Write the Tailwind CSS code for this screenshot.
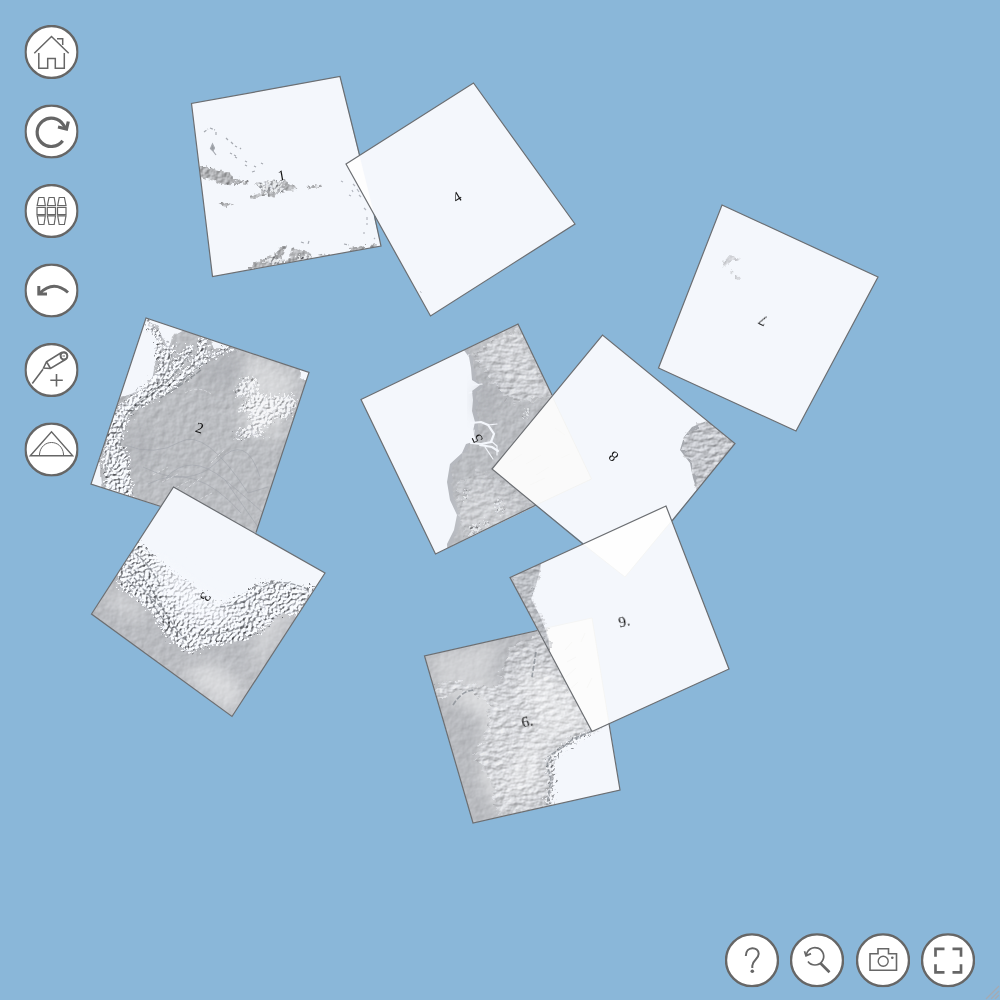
<!DOCTYPE html>
<html lang="en">
<head>
<meta charset="utf-8">
<title>Map puzzle</title>
<script src="https://cdn.jsdelivr.net/npm/@tailwindcss/browser@4"></script>
</head>
<body class="relative h-screen w-screen overflow-hidden bg-[#8ab7d9]">
<svg class="absolute inset-0" width="1000" height="1000" viewBox="0 0 1000 1000">
<defs>
  <filter id="plain" color-interpolation-filters="sRGB">
    <feTurbulence type="fractalNoise" baseFrequency="0.14" numOctaves="4" seed="4" result="n"/>
    <feDiffuseLighting in="n" surfaceScale="0.35" diffuseConstant="1.07" lighting-color="#f8faff" result="l"><feDistantLight azimuth="225" elevation="45"/></feDiffuseLighting>
    <feDisplacementMap in="SourceGraphic" in2="n" scale="8" xChannelSelector="R" yChannelSelector="G" result="d"/>
    <feComposite in="l" in2="d" operator="in"/>
  </filter>
  <filter id="hills" color-interpolation-filters="sRGB">
    <feTurbulence type="fractalNoise" baseFrequency="0.12 0.22" numOctaves="5" seed="9" result="n"/>
    <feDiffuseLighting in="n" surfaceScale="1.1" diffuseConstant="1.2" lighting-color="#f8faff" result="l"><feDistantLight azimuth="225" elevation="45"/></feDiffuseLighting>
    <feDisplacementMap in="SourceGraphic" in2="n" scale="14" xChannelSelector="R" yChannelSelector="G" result="d"/>
    <feComposite in="l" in2="d" operator="in"/>
  </filter>
  <filter id="peaks" color-interpolation-filters="sRGB">
    <feTurbulence type="fractalNoise" baseFrequency="0.36" numOctaves="3" seed="7" result="n"/>
    <feDiffuseLighting in="n" surfaceScale="2.3" diffuseConstant="1.32" lighting-color="#f8faff" result="l"><feDistantLight azimuth="225" elevation="48"/></feDiffuseLighting>
    <feComponentTransfer in="l" result="m"><feFuncR type="linear" slope=".8" intercept=".18"/><feFuncG type="linear" slope=".8" intercept=".185"/><feFuncB type="linear" slope=".8" intercept=".195"/></feComponentTransfer>
    <feDisplacementMap in="SourceGraphic" in2="n" scale="16" xChannelSelector="R" yChannelSelector="G" result="d"/>
    <feComposite in="m" in2="d" operator="in"/>
  </filter>
  <filter id="isle" color-interpolation-filters="sRGB" x="-20%" y="-40%" width="140%" height="180%">
    <feTurbulence type="fractalNoise" baseFrequency="0.25" numOctaves="3" seed="3" result="n"/>
    <feDiffuseLighting in="n" surfaceScale="0.7" diffuseConstant="1.03" lighting-color="#f4f6fa" result="l"><feDistantLight azimuth="225" elevation="45"/></feDiffuseLighting>
    <feDisplacementMap in="SourceGraphic" in2="n" scale="6" xChannelSelector="R" yChannelSelector="G" result="d"/>
    <feComposite in="l" in2="d" operator="in"/>
  </filter>
  <filter id="soft" x="-40%" y="-40%" width="180%" height="180%"><feGaussianBlur stdDeviation="8"/></filter>
  <path id="t1" d="M191.5 103.500L340 76.500L381 246L212.500 276.500Z"/>
  <path id="t2" d="M146 318L309 372.500L254 537L91 484Z"/>
  <path id="t3" d="M173.500 487L325 573L232 716.500L91.500 614Z"/>
  <path id="t4" d="M346 164L473.500 83L575 224L430.500 316Z"/>
  <path id="t5" d="M361 399.500L518 324L592 479L435.500 554Z"/>
  <path id="t6" d="M424.500 656L592 618L620 790L473 823Z"/>
  <path id="t7" d="M722 205L878 277L796 431L658.500 368Z"/>
  <path id="t8" d="M602.500 335L735 443.500L625 577L492 469Z"/>
  <path id="t9" d="M510 577.500L666 506L729 669L592 731.500Z"/>
  <clipPath id="c1"><use href="#t1"/></clipPath><clipPath id="c2"><use href="#t2"/></clipPath><clipPath id="c3"><use href="#t3"/></clipPath>
  <clipPath id="c5"><use href="#t5"/></clipPath><clipPath id="c6"><use href="#t6"/></clipPath><clipPath id="c7"><use href="#t7"/></clipPath><clipPath id="c8"><use href="#t8"/></clipPath><clipPath id="c9"><use href="#t9"/></clipPath>
</defs>

<!-- piece 1: Caribbean -->
<use href="#t1" fill="#f4f7fc"/>
<g clip-path="url(#c1)">
  <path filter="url(#isle)" d="M196 166L205 166L215 169L226 172L237 179L249 181L247 184L232 184L222 185L212 180L196 176ZM217 204L226 202L235 205L227 207ZM254 183L264 184L268 180L278 181L288 183L298 187L296 190L286 191L277 193L273 198L268 195L252 199L249 196L262 193L261 188ZM307 187L313 185L321 186L316 189L308 189ZM248 270L254 262L264 259L275 254L281 246L286 246L282 255L284 262L281 270ZM284 264L290 257L293 247L297 250L303 249L311 255L313 262L300 267L285 266ZM318 256L331 253L331 259L318 260ZM350 248L365 245L365 251L350 252ZM370 245L377 244L377 249L370 249Z"/>
  <path filter="url(#peaks)" opacity=".75" d="M258 184L266 182L278 182L284 187L282 192L262 192ZM231 180L247 182L240 184ZM264 260L276 256L282 262L276 268ZM296 256L310 256L312 264L298 264Z"/>
  <g fill="none" stroke="#a6aab1" stroke-width="1.200">
    <path d="M204 132L208 129M210 128L215 130M216 132L216 136M226 138l2 2M231 142l2 2M235 146l2 1M240 148l1 1M230 153l2 1M234 155l2 1M235 157l2 1M245 161l2 1M254 166l2 1M261 163l2 1M245 165l2 1M252 172l3-1M301 242l3 1M309 241l-1 3M344 244l5 1" stroke-dasharray="3 1.500"/>
    <path d="M210.500 148.500L212.500 144L214.500 148L213 151ZM213 151L216 155" fill="#989ca2"/>
    <path d="M341 181l2 1M353 184l2 2M357 189l2 3M359 195l2 2M364 208l2 2M367 217v3M367 223v2M364 232v2M352 190l1 2M349 195l2 1M374 238l1 1" stroke="#b4b8c0"/>
  </g>
</g>

<!-- piece 2: northern Andes -->
<use href="#t2" fill="#f4f7fc"/>
<g clip-path="url(#c2)">
  <path fill="#b9bcc2" d="M146 320L158 327L162 337L168 348L174 336L184 330L209 338L214 349L222 349L236 344L290 362L300 370L300 378L312 384L254 542L103 494L99 455L104 425L120 398L142 390L152 380L158 350L156 334Z"/>
  <path filter="url(#plain)" opacity=".8" d="M146 320L158 327L162 337L168 348L174 336L184 330L209 338L214 349L222 349L236 344L290 362L300 370L300 378L312 384L254 542L103 494L99 455L104 425L120 398L142 390L152 380L158 350L156 334Z"/>
  <path filter="url(#soft)" opacity=".35" fill="#a0a3a9" d="M205 362L240 350L250 365L235 385L200 385ZM130 430L150 430L150 465L135 465Z"/>
  <g fill="none" stroke="#fff" stroke-linecap="round" filter="url(#peaks)">
    <path stroke-width="6" d="M148 326Q164 333 158 358"/>
    <path stroke-width="10" d="M169 348Q166 375 144 392T122 416"/>
    <path stroke-width="8" d="M189 349Q168 378 152 388T124 412"/>
    <path stroke-width="8" d="M203 340Q203 363 175 382T128 408"/>
    <path stroke-width="5" d="M232 347L207 358L190 370"/>
    <path stroke-width="15" d="M124 410L113 438L110 460"/>
    <path stroke-width="25" d="M116 458L119 492"/>
  </g>
  <g fill="none" stroke="#74797f" stroke-width="1.300" opacity=".6" stroke-dasharray="6 1.500"><path d="M172 354Q166 382 146 396T124 420L114 440M192 350Q174 378 156 391T128 416M201 370Q182 385 160 398M206 347L202 364Q190 372 176 388M111 445L107 470M121 440L117 462"/></g>
  <path filter="url(#peaks)" opacity=".85" d="M235 392L243 378L256 378L257 390L270 397L292 395L297 405L289 418L276 416L268 426L258 429L266 438L252 436L238 439L236 432L252 425L248 412L238 410L246 402L254 394L240 398Z"/>
  <path filter="url(#soft)" opacity=".4" fill="#fff" d="M245 350L298 376L278 440L240 430Z"/>
  <g fill="none" stroke="#9fa4aa" stroke-width=".8" opacity=".7"><path d="M125 445Q155 457 180 442T248 493L268 487M166 478Q190 451 225 480T270 520M143 467Q190 490 218 461T260 477M225 480L258 527M148 484Q195 460 241 513"/></g>
  <g fill="none" stroke="#eef1f5" stroke-width=".8" opacity=".7"><path d="M153 475l15-8m-6 15 18-9m-8 17 18-10M185 490l17-13M196 501l16-8M211 463l13-13M185 393q14-8 26 1" stroke-dasharray="3 2"/></g>
</g>

<!-- piece 3: central Andes -->
<use href="#t3" fill="#f4f7fc"/>
<g clip-path="url(#c3)">
  <path fill="#b7babf" d="M118 568L154 610L190 650L240 638L300 602L322 590L232 723L88 616Z"/>
  <path filter="url(#plain)" opacity=".65" d="M118 568L154 610L190 650L240 638L300 602L322 590L232 723L82 616Z"/>
  <path filter="url(#soft)" opacity=".45" fill="#fff" d="M180 670L215 662L245 688L232 715L205 695Z"/>
  <path filter="url(#soft)" opacity=".4" fill="#fff" d="M113 588L150 615L135 620L105 600ZM260 620L300 600L250 680Z"/>
  <path filter="url(#peaks)" d="M136 540L151 552L170 570L190 583L206 595L220 603L240 597L256 584L275 580L296 586L320 586L299 614L280 614L262 630L240 641L212 644L190 653L168 638L154 615L138 599L121 588L116 572Z"/>
  <path fill="#f8faff" opacity=".7" filter="url(#soft)" d="M150 552L205 595L240 606L225 622L190 620L165 590Z"/>
  <g fill="none" stroke="#6a6f76" stroke-width="1.400" opacity=".65" stroke-dasharray="5 2"><path d="M122 562Q145 575 158 600T188 642M130 572Q144 592 162 608M127 580L138 590M150 598Q160 620 178 634M135 553Q150 565 160 585M220 607Q245 605 260 590T310 590M200 635Q235 635 255 618"/></g>
</g>

<use href="#t4" fill="#f4f7fc"/>
<path d="M346 164L359.500 155.500L374.500 216Z" fill="#fefefe"/>
<path d="M420 291.500l1.500 1" stroke="#b7bbc2"/>

<!-- piece 5: Amazon mouth -->
<use href="#t5" fill="#f4f7fc"/>
<g clip-path="url(#c5)">
  <path fill="#b6b9bf" d="M463 349L469 357L471 368L472 380L480 385L472 391L473 400L472 411L475 422L473 431L476 441L466 444L462 453L450 464L447 482L450 500L457 515L454 530L447 544L448 560L600 500L592 470L520 315Z"/>
  <path filter="url(#plain)" opacity=".85" d="M467 349L473 357L475 368L476 380L484 385L476 391L477 400L476 411L479 422L477 431L480 441L470 444L466 453L454 464L451 482L454 500L461 515L458 530L451 544L452 560L600 500L592 470L520 315Z"/>
  <path filter="url(#soft)" opacity=".35" fill="#fff" d="M480 345L518 328L550 400L520 395L500 370Z"/>
  <path filter="url(#soft)" opacity=".25" fill="#fff" d="M460 500L480 480L510 505L520 520L460 535Z"/>
  <path filter="url(#soft)" opacity=".4" fill="#a0a3a9" d="M476 388L498 382L490 420L477 415Z"/>
  <path filter="url(#hills)" opacity=".55" d="M472 355L517 327L552 396L515 403L494 385Z"/>
  <path filter="url(#hills)" opacity=".35" d="M455 485L480 470L515 490L535 505L465 540L460 515Z"/>
  <g filter="url(#peaks)"><path opacity=".6" d="M496 499l6 3l1 11l-7-2ZM470 527l9-3l2 10l-12 2ZM484 520l6 2l-2 6ZM464 490l4 3l-4 6ZM524 408l5 4l-3 9Z"/></g>
  <g fill="none" stroke="#f4f7fc" stroke-linecap="round"><path stroke-width="2.200" d="M471 423L481 422L488 425L494 434L491 442L481 444L471 443M480 445L492 447L498 451"/><path stroke-width="1.200" d="M488 425L497 424M473 385L482 384M491 441L497 446L497 455M485 447L493 459M472 392L469 393M474 430L473 440"/></g>
</g>

<use href="#t7" fill="#f4f7fc"/>
<g clip-path="url(#c7)"><path filter="url(#isle)" opacity=".5" d="M725 259L730 255L736 257L741 258L738 261L730 261L725 266L722 268ZM735 275L739 276L740 280L735 279ZM731 270l3 2l-2 1Z"/></g>

<!-- piece 8 -->
<use href="#t8" fill="#f4f7fc"/>
<path d="M492 469L552 396L591.500 479L536 505Z" fill="#fafafa"/>
<g fill="none" stroke="#f2f2f0" stroke-width=".8"><path d="M552 396L591.500 479L536 505"/><path d="M510 462l12-8m4 10 15-9m-5 20 13-8m-19 18 15-7m16-20 9-4m-15-26 10 7" opacity=".4"/></g>
<g clip-path="url(#c8)">
  <path fill="#a6a9af" d="M680 450L684 437L692 427L704 422L712 420L740 443L697 491L693 478L690 463Z"/>
  <path filter="url(#hills)" opacity=".7" d="M682 450L686 437L694 427L704 423L716 420L745 443L697 500L696 478L692 463Z"/>
</g>

<!-- piece 6: Brazilian highlands -->
<use href="#t6" fill="#f4f7fc"/>
<g clip-path="url(#c6)">
  <path fill="#b5b7bc" d="M420 650L595 610L600 728L565 742L550 760L553 783L546 810L470 830Z"/>
  <path filter="url(#plain)" opacity=".6" d="M418 650L605 608L605 726L572 738L553 756L553 783L548 813L465 835Z"/>
  <path filter="url(#soft)" opacity=".5" fill="#fff" d="M430 688L480 682L510 690L530 650L605 720L545 757L548 800L500 815L480 780L485 720L455 700Z"/>
  <path filter="url(#soft)" opacity=".35" fill="#fff" d="M428 657L500 640L490 680L440 685Z"/>
  <path filter="url(#hills)" opacity=".6" d="M428 690L452 680L496 688L510 648L545 630L600 730L570 740L553 755L552 785L545 808L500 815L490 780L474 755L488 730L488 700L460 690L435 700Z"/>
  <path filter="url(#soft)" opacity=".35" fill="#fff" d="M515 680L550 670L590 720L545 745L535 790L505 790L520 750L545 730Z"/>
  <path filter="url(#peaks)" opacity=".8" d="M597 729L570 739L553 753L546 765L550 782L545 808L552 805L555 780L553 763L565 748L590 735Z"/>
  <g fill="none" stroke="#868b92" stroke-width="1.700" opacity=".75"><path d="M592 731L573 739L563 747L552 754L547 764L551 779L547 805M536 652L532 677M453 705Q462 690 475 690" stroke-dasharray="5 2"/></g>
</g>

<!-- piece 9 -->
<use href="#t9" fill="#f4f7fc"/>
<path d="M583 544L666 506L671.500 521L625 577Z" fill="#fefefe"/>
<path d="M537.500 630.500L592 618L609 723.500L592 731.500Z" fill="#fcfcfc"/>
<g fill="none" stroke="#f3f3f1" stroke-width=".7"><path d="M583 544L625 577L671.500 521M546 628L592 618L609 723.500"/><path d="M565 650l7-8m-5 20 9-5m-10 20 10-9m-10 25 12-11m3-40 4-9m2 55 5-10" opacity=".7"/></g>
<g clip-path="url(#c9)">
  <path fill="#a9acb2" d="M508 575L541 563L539 574L535 588L531 599L539 614L546 631L549 643L550 655Z"/>
  <path filter="url(#hills)" opacity=".5" d="M508 575L541 563L540 574L536 588L532 599L540 614L547 631L550 643L550 655Z"/>
</g>

<!-- piece outlines; hidden stretches stay under the covering piece -->
<g fill="none" stroke="#6b6e72" stroke-width="1.200">
  <path d="M359.500 155L340 76.500L191.500 103.500L212.500 276.500L381 246L374.500 216"/>
  <path d="M256 532.500L309 372.500L146 318L91 484L161 506.500"/>
  <use href="#t3"/><use href="#t4"/><use href="#t7"/><use href="#t9"/>
  <path d="M552 395L518 324L361 399.500L435.500 554L536 505"/>
  <path d="M672 521L735 443.500L602.500 335L492 469L583 544"/>
  <path d="M537.500 630.500L424.500 656L473 823L620 790L609 723.500"/>
</g>

<g class="font-['Liberation_Serif',serif]" font-size="15" fill="#111" text-anchor="middle" opacity=".99">
  <text transform="translate(281.500 175.500) rotate(-10)" y="5">1</text>
  <text transform="translate(199.500 428) rotate(18)" y="5">2</text>
  <text transform="translate(205.500 597) rotate(120)" y="5">3</text>
  <text transform="translate(457 197) rotate(-32)" y="5">4</text>
  <text transform="translate(477 438.500) rotate(-116)" y="5">5</text>
  <text transform="translate(527 721.500) rotate(-13)" y="5">6.</text>
  <text transform="translate(763 320.500) rotate(-155)" y="5">7</text>
  <text transform="translate(613.500 456.500) rotate(-140)" y="5">8</text>
  <text transform="translate(624 621.500) rotate(-13)" y="5">9.</text>
</g>
<g stroke="#a5aab2" stroke-width="1.300"><path d="M986 999L999 986M991 999L999 991M995 999L999 995"/></g>
</svg>

<nav class="relative flex w-fit flex-col gap-[25.5px] pt-[25px] pl-[25px]">
  <button aria-label="Home" class="size-[54px] -translate-x-[0.5px]"><svg class="block size-[54px]" viewBox="0 0 54 54" fill="none" stroke="#666"><circle cx="27" cy="27" r="26" fill="#fff" stroke-width="2.400"/><path stroke-width="1.500" d="M9.800 28.200L27 11.500L44.200 28.200M14.300 28V43.300H23.200V33.500H30.800V43.300H39.800V28M32.500 13.800H38.200V20"/></svg></button>
  <button aria-label="Restart" class="size-[54px] -translate-x-[0.5px] -translate-y-[0.5px]"><svg class="block size-[54px]" viewBox="0 0 54 54" fill="none" stroke="#666"><circle cx="27" cy="27" r="26" fill="#fff" stroke-width="2.400"/><path stroke-width="3.200" d="M38.200 36.300A14.200 14.200 0 1 1 39 20.500L41.500 24.500"/><path stroke-width="3.200" d="M33.500 22.500L42 24.500L43.800 17"/></svg></button>
  <button aria-label="Arrange pieces" class="size-[54px] -translate-x-[0.5px]"><svg class="block size-[54px]" viewBox="0 0 54 54" fill="none" stroke="#666" stroke-width="1.200"><circle cx="27" cy="27" r="26" fill="#fff" stroke-width="2.400"/><path d="M14.300 13.500H19.500L20.800 21.500H12.700ZM24.500 13.500H29.700L31 21.500H22.900ZM34.700 13.500H39.900L41.500 21.500H33.200ZM12.700 31.800H20.800L19.500 40.500H14.300ZM22.900 31.800H31L29.700 40.500H24.500ZM33.200 31.800H41.500L39.900 40.500H34.700Z"/><path d="M12.500 23.300H20.800V30.700H12.500ZM22.800 23.300H31V30.700H22.800ZM33 23.300H41.500V30.700H33Z"/></svg></button>
  <button aria-label="Undo" class="size-[54px] -translate-x-[0.5px] -translate-y-[0.5px]"><svg class="block size-[54px]" viewBox="0 0 54 54" fill="none" stroke="#666"><circle cx="27" cy="27" r="26" fill="#fff" stroke-width="2.400"/><path stroke-width="3" d="M14.300 22.500V30.500H22.500M15 30Q29 16 43.500 29"/></svg></button>
  <button aria-label="Add pin" class="size-[54px] -translate-x-[0.5px]"><svg class="block size-[54px]" viewBox="0 0 54 54" fill="none" stroke="#666" stroke-width="1.600"><circle cx="27" cy="27" r="26" fill="#fff" stroke-width="2.400"/><path d="M7.800 40.500L18.500 26.200M19 25L22 18.700L37 9.500A4 4 0 0 1 41 16.500L26 25.500ZM22 18.700L26 25.500M37 9.500Q34.500 13 38.500 17M32 31V43.500M25.800 37.300H38.300"/><circle cx="39.300" cy="13" r="3.300"/><path stroke-width="1" d="M38 13h2.500"/></svg></button>
  <button aria-label="Set square" class="size-[54px] -translate-x-[0.5px] -translate-y-[0.5px]"><svg class="block size-[54px]" viewBox="0 0 54 54" fill="none" stroke="#666" stroke-width="1.400"><circle cx="27" cy="27" r="26" fill="#fff" stroke-width="2.400"/><path d="M5.800 33.300L27 9.200L48.200 33.300Z"/><path stroke-width="1" d="M15 32.800V31.500C15.800 24.300 21 20 27 20S38.300 24.300 39 31.500V32.800"/></svg></button>
</nav>

<div class="absolute right-[25px] bottom-[12px] flex -translate-y-[0.7px] gap-[11.3px]">
  <button aria-label="Help" class="size-[54px]"><svg class="block size-[54px]" viewBox="0 0 54 54" fill="none" stroke="#666"><circle cx="27" cy="27" r="26" fill="#fff" stroke-width="2.400"/><path stroke-width="2" d="M20.800 22.800C20.800 12 33.700 13.200 33.700 20.500C33.700 26 27.300 27 27.300 32.500V34.700"/><circle cx="27.300" cy="38" r="1.800" fill="#666" stroke="none"/></svg></button>
  <button aria-label="Reset zoom" class="size-[54px]"><svg class="block size-[54px]" viewBox="0 0 54 54" fill="none" stroke="#666"><circle cx="27" cy="27" r="26" fill="#fff" stroke-width="2.400"/><path stroke-width="1.700" d="M18 28.200A8.700 8.700 0 1 0 16.300 22.500M14.500 18L16 22.500L21 20.300"/><path stroke-width="2.700" d="M30.500 30L39.500 39"/></svg></button>
  <button aria-label="Screenshot" class="size-[54px]"><svg class="block size-[54px]" viewBox="0 0 54 54" fill="none" stroke="#666" stroke-width="1.600"><circle cx="27" cy="27" r="26" fill="#fff" stroke-width="2.400"/><path d="M14 20.500H22V15.500H32.500V20.500H40.500V37H14Z"/><circle cx="27.200" cy="28" r="5" stroke-width="1.400"/><circle cx="36.300" cy="24.500" r="1.300" fill="#666" stroke="none"/></svg></button>
  <button aria-label="Full screen" class="size-[54px]"><svg class="block size-[54px]" viewBox="0 0 54 54" fill="none" stroke="#666"><circle cx="27" cy="27" r="26" fill="#fff" stroke-width="2.400"/><path stroke-width="2.700" d="M14.500 23.500V15.500H23.500M31.500 15.500H40V23.500M40 31V39H31.500M23.500 39H14.500V31"/></svg></button>
</div>
</body>
</html>
